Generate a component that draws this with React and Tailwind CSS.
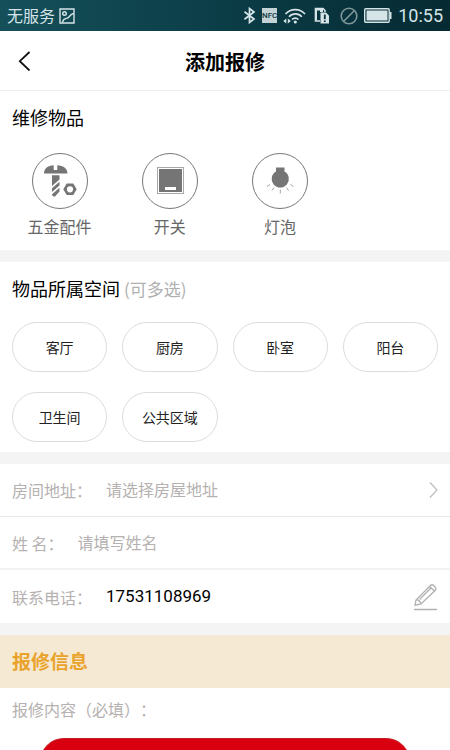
import { useState } from "react";

const ITEMS = [
  { name: "五金配件", Icon: ScrewIcon },
  { name: "开关", Icon: SwitchIcon },
  { name: "灯泡", Icon: BulbIcon },
];

const SPACES = ["客厅", "厨房", "卧室", "阳台", "卫生间", "公共区域"];

function ScrewIcon() {
  return (
    <svg viewBox="1 1 54 54" className="size-full" fill="#757575" aria-hidden="true">
      <path d="M12 20.500C12 15.500 16 12.500 21.700 12.300V17H25.300V12.300C31 12.500 35.500 15.500 35.500 20.500Z" />
      <path d="M20 22.300H27.500V26.500L20 33ZM27.500 28.800V32.500L20 39V35.300ZM27.500 34.800V38.500L23 43.500H21.500L20 42V41.300Z" />
      <path fillRule="evenodd" d="M34.700 30.500H41.300L44.700 36.300L41.300 42H34.700L31.300 36.300ZM38 33.200A3.100 3.100 0 1 0 38 39.400A3.100 3.100 0 1 0 38 33.200Z" />
    </svg>
  );
}

function SwitchIcon() {
  return (
    <svg viewBox="1 1 54 54" className="size-full" aria-hidden="true">
      <rect x="15.500" y="14.500" width="26" height="26" fill="#fff" stroke="#a8a8a8" />
      <rect x="17" y="16" width="23" height="23" fill="#757575" />
      <rect x="23" y="34" width="11" height="3" fill="#fff" />
    </svg>
  );
}

function BulbIcon() {
  return (
    <svg viewBox="1 1 54 54" className="size-full" aria-hidden="true">
      <path fill="#757575" d="M24 14.500H32.500V18.500A8.600 8.600 0 1 1 24 18.500Z" />
      <path
        stroke="#a3a3a3"
        fill="none"
        d="M15 33.500L18 31.500M20 37.500L22 34.500M28.300 36.500V40.500M34.500 34.500L36.500 37.500M38.500 31.500L41.500 33.500"
      />
    </svg>
  );
}

function StatusBar() {
  return (
    <div className="flex h-[31px] items-center justify-between bg-linear-to-r from-[#15505a] via-[#0b3d47] to-[#062a32] px-[7px] text-[#d5e4e6]">
      <div className="flex items-center gap-1">
        <span className="pb-0.5 text-base leading-6">无服务</span>
        <svg width="16" height="16" viewBox="0 0 16 16" fill="none" stroke="currentColor" strokeWidth="1.400" aria-hidden="true">
          <path d="M1 1H15V15H1ZM3.500 14C5 9 8 11.500 10 9S12 6 14.500 5.500" />
          <circle cx="5.500" cy="5.500" r="1.800" />
        </svg>
      </div>
      <div className="flex items-center gap-1.5">
        <svg width="13" height="17" viewBox="0 0 13 17" fill="none" stroke="currentColor" strokeWidth="1.700" aria-hidden="true">
          <path d="M1.500 4.800L11 12L6.500 15.500V1.500L11 5L1.500 12.200" />
        </svg>
        <span className="flex h-[15px] w-[15px] items-center justify-center bg-[#c3d3d5] font-[Roboto] text-[8px] leading-none font-medium text-[#0b3740]">
          NFC
        </span>
        <svg width="23" height="16" viewBox="0 0 23 16" fill="none" stroke="currentColor" strokeWidth="1.700" aria-hidden="true">
          <path d="M2.500 6A13 13 0 0 1 22 6M6 8.800A8.500 8.500 0 0 1 18.800 8.800M9 11.500A4.500 4.500 0 0 1 15.500 11.500" />
          <circle cx="12.300" cy="14" r="1.600" fill="currentColor" stroke="none" />
          <path d="M3.300 10.500V15.500L.3 13ZM4.800 10.500V15.500L7.800 13Z" fill="currentColor" stroke="none" />
        </svg>
        <svg width="16" height="17" viewBox="0 0 16 17" className="ml-0.5" fill="none" aria-hidden="true">
          <path d="M6 14H1.500V1.500H9L11 3.500V5" stroke="currentColor" strokeWidth="1.600" />
          <path d="M1 1H9V5H6V3.500H3V13H1Z" fill="currentColor" />
          <path d="M6.500 5.500H12L15 8.500V16.500H6.500Z" fill="currentColor" />
          <path d="M10.800 7.500V12.300M10.800 13.500V15" stroke="#0a323b" strokeWidth="1.800" />
        </svg>
        <svg width="18" height="18" viewBox="0 0 18 18" className="ml-1" fill="none" stroke="#7f979b" strokeWidth="1.600" aria-hidden="true">
          <circle cx="9" cy="9" r="7.800" />
          <path d="M3.500 14.500L14.500 3.500" />
        </svg>
        <svg width="28" height="15" viewBox="0 0 28 15" fill="none" aria-hidden="true">
          <rect x=".7" y=".7" width="24.500" height="13.500" rx="1" stroke="currentColor" strokeWidth="1.400" />
          <rect x="2.500" y="2.500" width="21" height="10" fill="currentColor" />
          <path d="M26 4H27.500V11H26Z" fill="currentColor" />
        </svg>
        <span className="font-[Roboto] text-lg leading-6">10:55</span>
      </div>
    </div>
  );
}

export default function App() {
  const [spaces, setSpaces] = useState([]);
  const [item, setItem] = useState(null);

  const toggle = (name) =>
    setSpaces((prev) => (prev.includes(name) ? prev.filter((s) => s !== name) : [...prev, name]));

  return (
    <div className="h-screen overflow-hidden bg-white font-['Noto_Sans_CJK_SC',sans-serif] text-black">
      <StatusBar />

      <header className="grid h-[60px] grid-cols-[48px_1fr_48px] items-center border-b border-[#f0f0f0]">
        <button type="button" aria-label="返回" className="flex h-full items-center pl-[18px]">
          <svg width="13" height="20" viewBox="0 0 13 20" fill="none" stroke="#111" strokeWidth="1.800" aria-hidden="true">
            <path d="M11.500 1L1.800 10.200L11.500 19.500" />
          </svg>
        </button>
        <h1 className="pt-0.5 text-center text-xl font-bold">添加报修</h1>
      </header>

      <section className="px-3 pt-[14px] pb-[14px]">
        <h2 className="text-lg leading-6">维修物品</h2>
        <div className="mt-6 grid grid-cols-4 gap-[15px]">
          {ITEMS.map(({ name, Icon }) => (
            <button
              key={name}
              type="button"
              aria-pressed={item === name}
              onClick={() => setItem(name)}
              className="flex flex-col items-center gap-[7px] text-base leading-5 text-[#666]"
            >
              <span className="size-14 rounded-full border border-[#777]">
                <Icon />
              </span>
              {name}
            </button>
          ))}
        </div>
      </section>

      <div className="h-3 bg-[#f4f4f4]" />

      <section className="px-3 pt-[14px] pb-[10px]">
        <h2 className="text-lg leading-6">
          物品所属空间 <span className="text-[17px] text-[#b0b0b0]">(可多选)</span>
        </h2>
        <div className="mt-[21px] grid grid-cols-4 gap-x-[15px] gap-y-5">
          {SPACES.map((name) => (
            <button
              key={name}
              type="button"
              aria-pressed={spaces.includes(name)}
              onClick={() => toggle(name)}
              className="h-[50px] rounded-full border border-[#dcdcdc] text-sm text-[#222] aria-pressed:border-[#d9000f]"
            >
              {name}
            </button>
          ))}
        </div>
      </section>

      <div className="h-3 bg-[#f4f4f4]" />

      <form>
        <div className="flex h-[53px] items-center gap-[14px] border-b border-[#e8e8e8] px-3">
          <label htmlFor="address" className="text-base text-[#b5b1b0]">房间地址：</label>
          <select id="address" defaultValue="" className="min-w-0 flex-1 appearance-none bg-transparent pb-0.5 text-base text-[#b5b1b0]">
            <option value="">请选择房屋地址</option>
          </select>
          <svg width="9" height="16" viewBox="0 0 9 16" fill="none" stroke="#bbb" strokeWidth="1.200" aria-hidden="true">
            <path d="M1 .5L8 8L1 15.500" />
          </svg>
        </div>
        <div className="flex h-[53px] items-center gap-[14px] border-b-2 border-[#f2f2f2] px-3">
          <label htmlFor="name" className="text-base text-[#b5b1b0]">姓 名：</label>
          <input id="name" placeholder="请填写姓名" className="min-w-0 flex-1 pb-0.5 text-base placeholder:text-[#b5b1b0]" />
        </div>
        <div className="flex h-[53px] items-center gap-[14px] px-3">
          <label htmlFor="phone" className="text-base text-[#b5b1b0]">联系电话：</label>
          <input id="phone" type="tel" defaultValue="17531108969" className="min-w-0 flex-1 font-[Roboto] text-[17px]" />
          <button type="button" aria-label="编辑电话">
            <svg width="25" height="28" viewBox="0 0 25 28" fill="none" stroke="#b0b0b0" strokeWidth="1.300" aria-hidden="true">
              <path d="M2 22.500L3 17L17.500 2.500Q19 1 20.500 2.500L22.500 4.500Q23.500 5.500 22.500 7L8 21ZM3 17Q6.500 16.500 8 21M6.500 16.500L18.500 4.500M16.500 3.500L21.500 8" />
              <path d="M1 26.500H24" strokeWidth="1.500" />
            </svg>
          </button>
        </div>

        <div className="h-3 bg-[#f4f4f4]" />

        <h2 className="flex h-[53px] items-center bg-[#f6e9d3] px-3 text-[19px] font-bold text-[#e9a32b]">报修信息</h2>
        <div className="flex h-[50px] items-start px-3 pt-[9px]">
          <label htmlFor="content" className="text-base text-[#b5b1b0] [text-spacing-trim:space-all]">报修内容（必填）：</label>
          <textarea id="content" rows={1} className="min-w-0 flex-1 resize-none text-base" />
        </div>
        <div className="px-10">
          <button
            type="submit"
            aria-label="提交"
            className="h-12 w-full rounded-full border-t border-[#c01a22] bg-[#d9000f]"
          />
        </div>
      </form>
    </div>
  );
}
